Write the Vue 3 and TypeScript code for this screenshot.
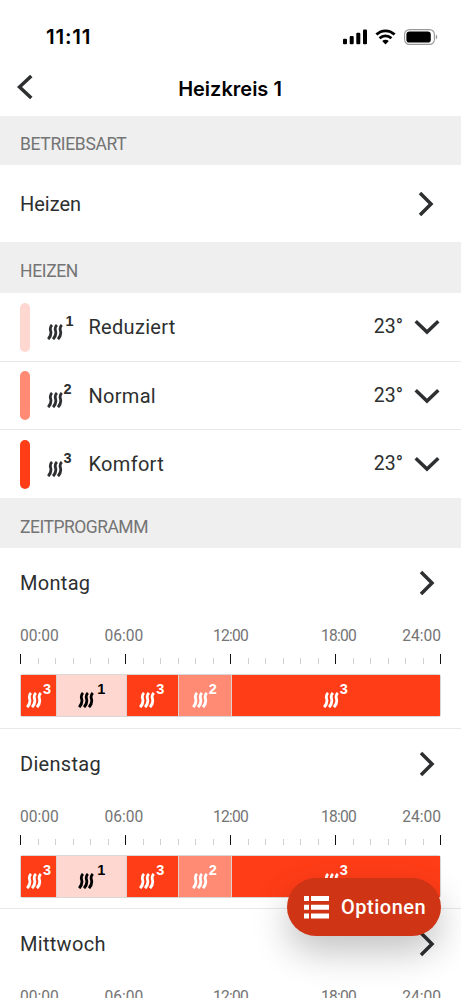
<script setup lang="ts">
interface Mode { level: number; name: string; temp: string }
interface Slot { from: number; to: number; level: number }

const modes: Mode[] = [
  { level: 1, name: 'Reduziert', temp: '23°' },
  { level: 2, name: 'Normal', temp: '23°' },
  { level: 3, name: 'Komfort', temp: '23°' },
]
const days: string[] = ['Montag', 'Dienstag', 'Mittwoch']
const slots: Slot[] = [
  { from: 0, to: 2, level: 3 },
  { from: 2, to: 6, level: 1 },
  { from: 6, to: 9, level: 3 },
  { from: 9, to: 12, level: 2 },
  { from: 12, to: 24, level: 3 },
]
const hours: string[] = ['00:00', '06:00', '12:00', '18:00', '24:00']
const ticks: number[] = Array.from({ length: 25 }, (_, i) => i)
</script>

<template>
  <main class="screen">
    <svg class="defs" width="0" height="0" aria-hidden="true">
      <symbol id="heat" viewBox="0 0 16 16">
        <g fill="none" stroke="currentColor" stroke-width="2.8">
          <path d="M5 .9C3.1 2.8 2.9 4.3 3.6 6.6S4.4 11.6 1.2 15.2" />
          <path d="M9.9.9C8 2.8 7.8 4.3 8.5 6.6S9.3 11.6 6.1 15.2" />
          <path d="M14.8.9C12.9 2.8 12.7 4.3 13.4 6.6S14.2 11.6 11 15.2" />
        </g>
      </symbol>
    </svg>

    <div class="status">
      <span class="clock">11:11</span>
      <svg class="signal" viewBox="0 0 24 16">
        <rect x="0" y="9.8" width="4" height="5.5" rx="1.1" />
        <rect x="6.7" y="6.9" width="4" height="8.4" rx="1.1" />
        <rect x="13.3" y="3.7" width="4" height="11.6" rx="1.1" />
        <rect x="20" y=".5" width="4" height="14.8" rx="1.1" />
      </svg>
      <svg class="wifi" viewBox="0 0 20 16">
        <g fill="none" stroke="#000" stroke-width="2.8">
          <path d="M.9 5.6C6 .5 14 .5 19.1 5.6" />
          <path d="M4.1 9.2C7.4 6 12.6 6 15.9 9.2" />
        </g>
        <path d="M10 15.4 6.7 12.1C8.5 10.4 11.5 10.4 13.3 12.1Z" />
      </svg>
      <svg class="battery" viewBox="0 0 34 16">
        <rect x=".6" y=".6" width="29.8" height="14.8" rx="4.8" fill="none" stroke="#999" stroke-width="1.1" />
        <rect x="2.4" y="2.4" width="24.4" height="11.2" rx="3.2" />
        <path d="M31.8 5.5Q33.3 6.3 33.3 8T31.8 10.5Z" fill="#999" />
      </svg>
    </div>

    <header class="nav">
      <svg class="back" viewBox="0 0 16 26"><path d="M14.3 1.9 2.5 13 14.3 24.1" /></svg>
      <h1>Heizkreis 1</h1>
    </header>

    <h2 class="section first">BETRIEBSART</h2>
    <div class="row operating">
      <span class="label">Heizen</span>
      <svg class="right" viewBox="0 0 16 26"><path d="M2 2 13 13 2 24" /></svg>
    </div>

    <h2 class="section second">HEIZEN</h2>
    <div v-for="m in modes" :key="m.level" class="row mode">
      <i :class="['swatch', 'level' + m.level]"></i>
      <span class="heat"><svg><use href="#heat" /></svg><sup :class="{ one: m.level === 1 }">{{ m.level }}</sup></span>
      <span class="label">{{ m.name }}</span>
      <span class="temp">{{ m.temp }}</span>
      <svg class="down" viewBox="0 0 26 16"><path d="M1.7 2.2 13 13 24.3 2.2" /></svg>
    </div>

    <h2 class="section third">ZEITPROGRAMM</h2>
    <section v-for="d in days" :key="d" class="day">
      <div class="dayhead">
        <span class="label">{{ d }}</span>
        <svg class="right" viewBox="0 0 16 26"><path d="M2 2 13 13 2 24" /></svg>
      </div>
      <div class="hours"><span v-for="h in hours" :key="h" :class="{ tight: h[0] === '1' }">{{ h }}</span></div>
      <div class="ticks"><i v-for="t in ticks" :key="t" :class="{ major: t % 6 === 0 }"></i></div>
      <div class="bar">
        <div v-for="s in slots" :key="s.from" :class="['slot', 'level' + s.level]" :style="{ flexGrow: s.to - s.from }">
          <span class="heat"><svg><use href="#heat" /></svg><sup :class="{ one: s.level === 1 }">{{ s.level }}</sup></span>
        </div>
      </div>
    </section>

    <button class="options" type="button">
      <svg viewBox="0 0 25 23">
        <path d="M0 0h5v5H0zM7 0h18v5H7zM0 8.7h5v5H0zM7 8.7h18v5H7zM0 17.4h5v5H0zM7 17.4h18v5H7z" />
      </svg>
      <span>Optionen</span>
    </button>
  </main>
</template>

<style>
body { margin: 0; background: #fff; overflow: hidden; }
</style>

<style scoped>
* { box-sizing: border-box; }
.screen { position: relative; width: 461px; height: 998px; overflow: hidden; background: #fff; color: #2d2f30; font-family: Roboto, sans-serif; }
.defs { position: absolute; }
svg { display: block; flex: none; }
.status { display: flex; align-items: center; height: 60px; padding: 13px 23px 0 46px; }
.clock { margin-right: auto; font: 600 20.5px/24px Inter, sans-serif; letter-spacing: .8px; color: #000; }
.signal { width: 24px; height: 16px; }
.wifi { width: 21px; height: 16px; margin-left: 8px; }
.battery { width: 34px; height: 16px; margin-left: 8px; }
.nav { display: flex; align-items: center; height: 55.6px; padding-left: 17px; }
.nav h1 { flex: 1; margin: 3px 34px 0 0; text-align: center; font: 600 20px/26px Inter, sans-serif; color: #000; }
.back { width: 16px; height: 26px; margin-top: -2px; }
.back path, .right path, .down path { fill: none; stroke: #2d2f30; stroke-width: 3.5; }
.section { margin: 0; padding-left: 20px; background: #efefef; color: #747474; font-size: 17.5px; font-weight: 400; letter-spacing: -.35px; }
.first { height: 49.4px; line-height: 56px; }
.second { height: 50.6px; line-height: 59px; }
.third { height: 50px; line-height: 58px; letter-spacing: -.5px; }
.row { display: flex; align-items: center; padding: 0 26px 0 20px; }
.label { font-size: 20px; line-height: 26px; letter-spacing: .3px; }
.operating { height: 77px; padding-top: 2px; }
.operating .label { letter-spacing: 0; }
.right { width: 16px; height: 26px; margin-left: auto; }
.operating .right { margin-right: 1px; }
.mode { height: 68.2px; padding: 1px 21px 0 20px; }
.mode + .mode { height: 68.6px; padding-top: 0; border-top: 1px solid #e8e8e8; }
.swatch { width: 10px; height: 49px; border-radius: 5px; }
.level1 { background: #ffd7d1; color: #000; }
.level2 { background: #ff8b75; color: #fff; }
.level3 { background: #ff3d17; color: #fff; }
.heat { display: flex; width: 25px; height: 25px; align-items: flex-end; justify-content: space-between; }
.heat svg { width: 16px; height: 16px; }
.heat sup { align-self: flex-start; font: 700 14.5px/13px "Liberation Sans", sans-serif; }
.heat .one { margin-right: -2px; }
.mode .heat { margin: 0 17px 0 16.5px; }
.mode .label { flex: 1; }
.temp { font-size: 19.5px; line-height: 26px; margin-right: 11px; }
.down { width: 26px; height: 16px; }
.day { height: 180.6px; padding: 0 20px; border-bottom: 1px solid #e8e8e8; }
.dayhead { display: flex; align-items: center; height: 69px; padding: 1px 6px 0 0; }
.hours { display: grid; grid-template-columns: 84.5px 108.5px 108px 1fr auto; height: 37px; padding-top: 8px; font-size: 15.6px; line-height: 22px; color: #747474; }
.hours .tight { letter-spacing: -.75px; }
.ticks { display: flex; justify-content: space-between; align-items: flex-end; height: 10px; }
.ticks i { width: 1px; height: 6px; background: #d0d0d0; }
.ticks .major { height: 10px; background: #111; }
.bar { display: flex; height: 43px; margin-top: 10px; padding: 1px; border-radius: 3px; background: #d9d6d5; overflow: hidden; }
.slot { display: flex; flex: 0 0 0; min-width: 0; align-items: center; justify-content: center; }
.slot + .slot { box-shadow: inset 1px 0 #dfd1ce; }
.options { position: absolute; left: 287px; top: 878px; display: flex; align-items: center; width: 154px; height: 58px; padding: 0 0 0 17px; border: 0; border-radius: 29px; background: #cf3415; color: #fff; font: 500 20px/26px Roboto, sans-serif; letter-spacing: .5px; box-shadow: 0 16px 36px rgba(0, 0, 0, .24); }
.options svg { width: 25px; height: 23px; margin-right: 12px; fill: #fff; }
</style>
